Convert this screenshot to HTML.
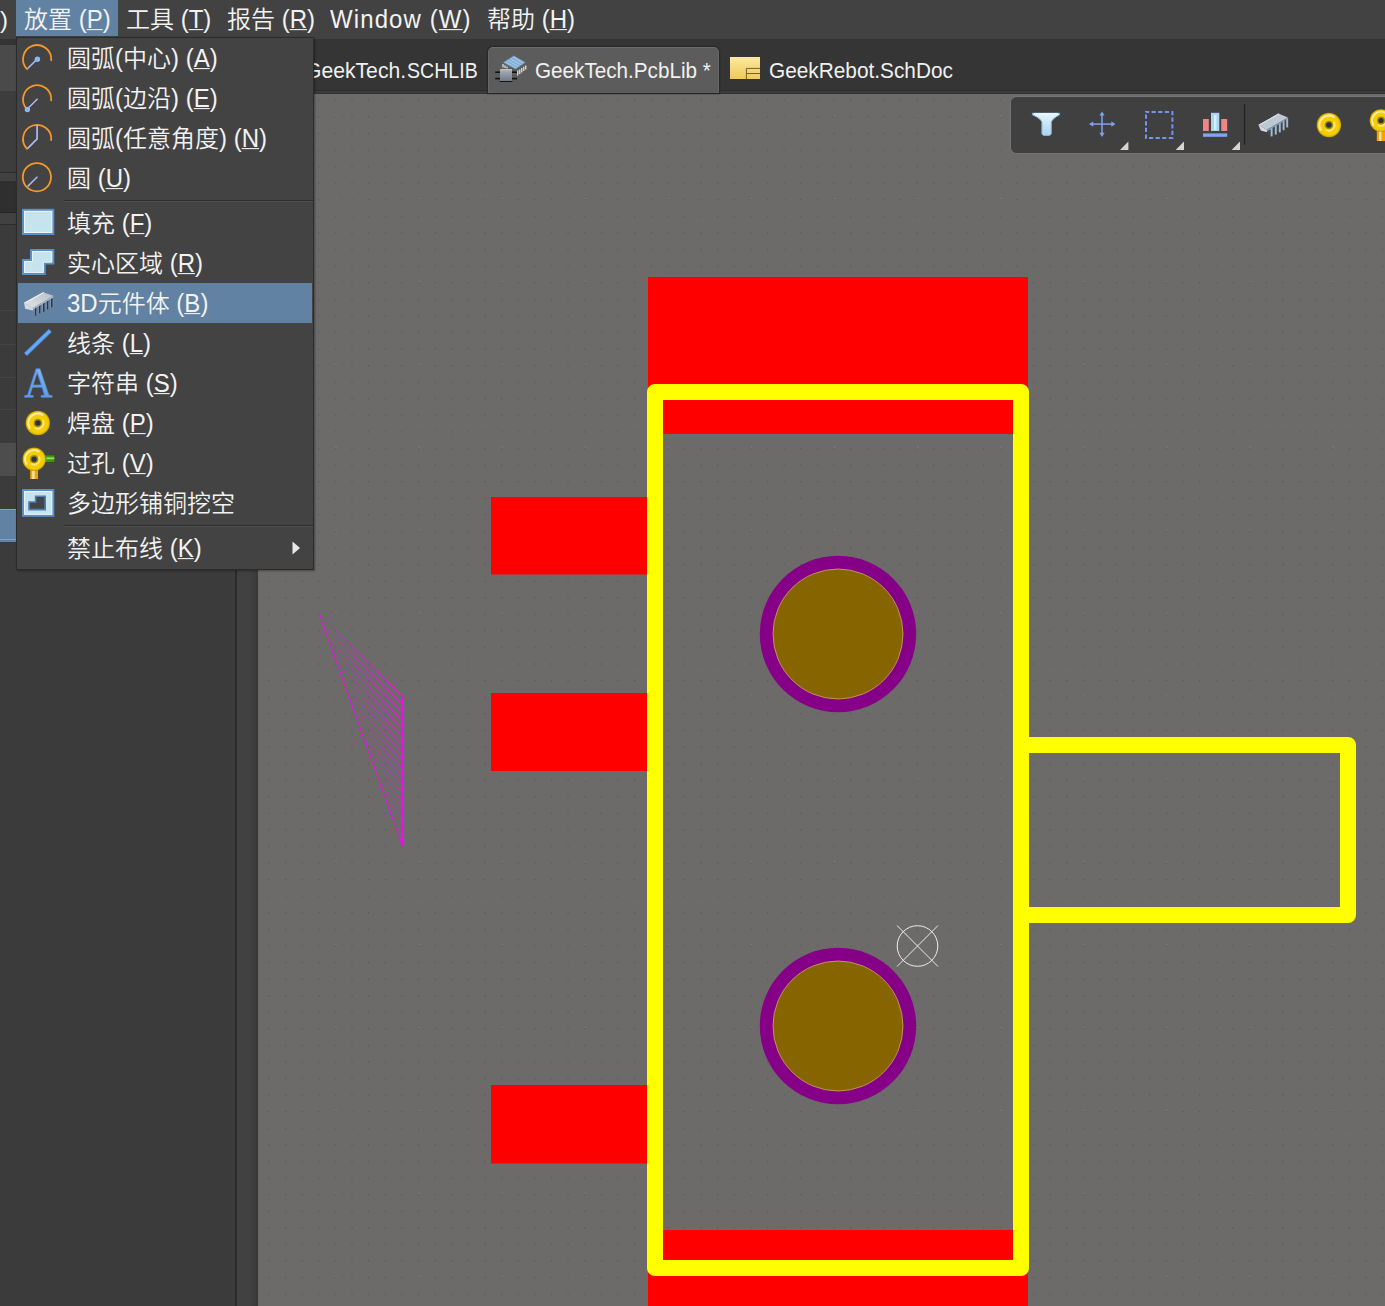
<!DOCTYPE html>
<html lang="zh-CN">
<head>
<meta charset="utf-8">
<title>PCB Library Editor</title>
<style>
html,body{margin:0;padding:0;}
body{width:1385px;height:1306px;overflow:hidden;position:relative;background:#6c6b69;
  font-family:"Liberation Sans","Noto Sans CJK SC",sans-serif;color:#f0f0f0;font-weight:350;}
.abs{position:absolute;}
#canvas{position:absolute;left:0;top:0;width:1385px;height:1306px;}
#menubar{position:absolute;left:0;top:0;width:1385px;height:39px;background:#424242;}
#menubar .mi{position:absolute;top:0;height:36px;line-height:40.2px;font-size:24px;white-space:nowrap;color:#f2f2f2;}
#menubar .mi u{text-decoration-thickness:1.2px;text-underline-offset:0.8px;}
#tabbar{position:absolute;left:0;top:38px;width:1385px;height:55.7px;background:#353535;}
#tabline{position:absolute;left:314px;top:89.5px;width:1071px;height:4.2px;background:#3a3a3a;border-top:1px solid #2d2d2d;border-bottom:1px solid #333;box-sizing:border-box;}
.tab{position:absolute;font-size:22.6px;line-height:26px;white-space:nowrap;color:#f0f0f0;transform:scaleX(0.928);transform-origin:left center;}
#acttab{position:absolute;left:488px;top:46.7px;width:230.6px;height:46px;background:#5c5c5c;border:1.2px solid #676767;border-top-color:#6c6c6c;border-bottom:none;border-radius:5px 5px 0 0;box-sizing:border-box;box-shadow:0 0 0 1.2px #282828;}
#leftpanel{position:absolute;left:0;top:38px;width:235px;height:1268px;background:#3b3b3b;}
#vline{position:absolute;left:235px;top:93px;width:1.5px;height:1213px;background:#2c2c2c;}
#vstrip{position:absolute;left:236.5px;top:93px;width:21.5px;height:1213px;background:linear-gradient(to right,#414141 0%,#414141 55%,#383838 100%);}
#menu{position:absolute;left:16px;top:37px;width:298px;height:533px;box-sizing:border-box;background:#434343;border:1px solid #2b2b2b;box-shadow:1px 1px 2px rgba(0,0,0,0.35);}
.it{position:absolute;left:1px;width:294px;height:40px;}
.it.hl{background:#6182a3;}
.it .tx{position:absolute;left:49px;top:0;line-height:42px;font-size:24px;white-space:nowrap;color:#f2f2f2;}
.it .tx u{text-decoration-thickness:1.2px;text-underline-offset:0.8px;}
.it svg{position:absolute;left:3px;top:4px;width:32px;height:32px;}
.la{display:inline-block;transform:scaleY(1.075);transform-origin:50% 69.8%;}
.sep{position:absolute;left:47px;width:249px;height:1px;background:#2c2c2c;border-bottom:1px solid #505050;}
#toolbar{position:absolute;left:1011px;top:97px;width:400px;height:55.6px;background:#404040;border-radius:5.5px;box-shadow:0 0 0 1px rgba(125,124,121,0.6);}
</style>
</head>
<body>
<svg id="canvas" viewBox="0 0 1385 1306">
  <defs>
    <pattern id="grid" x="2.4" y="0.2" width="16.62" height="16.58" patternUnits="userSpaceOnUse">
      <rect x="0" y="0" width="1.3" height="1.3" fill="#5a5957"/>
    </pattern>
    <pattern id="grid5" x="3" y="32.2" width="83.1" height="82.9" patternUnits="userSpaceOnUse">
      <rect x="0" y="0" width="1.2" height="1.2" fill="#838280"/>
    </pattern>
    <clipPath id="triclip"><polygon points="319.5,614.5 402.5,696.5 402.5,846"/></clipPath>
  </defs>
  <rect x="258" y="94" width="1127" height="1212" fill="url(#grid)"/>
  <rect x="258" y="94" width="1127" height="1212" fill="url(#grid5)"/>
  <!-- red pads -->
  <g fill="#ff0000">
    <rect x="648" y="277" width="380" height="157"/>
    <rect x="491" y="497" width="157" height="77.5"/>
    <rect x="491" y="693" width="157" height="78"/>
    <rect x="491" y="1085" width="157" height="78.5"/>
    <rect x="648" y="1230" width="380" height="80"/>
  </g>
  <!-- yellow outline -->
  <g fill="none" stroke="#ffff00" stroke-width="16" stroke-linejoin="round" stroke-linecap="round">
    <rect x="655" y="392" width="366" height="876"/>
    <polyline points="1021,745 1348,745 1348,915 1021,915"/>
  </g>
  <!-- pads -->
  <circle cx="838" cy="634" r="78.2" fill="#860087"/>
  <circle cx="838" cy="634" r="65" fill="#866400" stroke="#d9bb72" stroke-width="0.9" stroke-opacity="0.75"/>
  <circle cx="838" cy="1026" r="78.2" fill="#860087"/>
  <circle cx="838" cy="1026" r="65" fill="#866400" stroke="#d9bb72" stroke-width="0.9" stroke-opacity="0.75"/>
  <!-- origin marker -->
  <g fill="none" stroke="#ececec" stroke-width="1">
    <circle cx="917.5" cy="946" r="20.3"/>
    <line x1="897" y1="925.5" x2="938" y2="966.5"/>
    <line x1="897" y1="966.5" x2="938" y2="925.5"/>
  </g>
  <!-- hatched region -->
  <g stroke="#ff00ff" stroke-width="0.9" fill="none">
    <polygon points="319.5,614.5 402.5,696.5 402.5,846"/>
    <g clip-path="url(#triclip)"><line x1="402.5" y1="704.5" x2="302.5" y2="605.8"/><line x1="402.5" y1="712.6" x2="302.5" y2="613.8"/><line x1="402.5" y1="720.6" x2="302.5" y2="621.9"/><line x1="402.5" y1="728.7" x2="302.5" y2="629.9"/><line x1="402.5" y1="736.8" x2="302.5" y2="638.0"/><line x1="402.5" y1="744.8" x2="302.5" y2="646.0"/><line x1="402.5" y1="752.9" x2="302.5" y2="654.1"/><line x1="402.5" y1="760.9" x2="302.5" y2="662.1"/><line x1="402.5" y1="769.0" x2="302.5" y2="670.2"/><line x1="402.5" y1="777.0" x2="302.5" y2="678.2"/><line x1="402.5" y1="785.0" x2="302.5" y2="686.2"/><line x1="402.5" y1="793.1" x2="302.5" y2="694.3"/><line x1="402.5" y1="801.1" x2="302.5" y2="702.4"/><line x1="402.5" y1="809.2" x2="302.5" y2="710.4"/><line x1="402.5" y1="817.2" x2="302.5" y2="718.5"/><line x1="402.5" y1="825.3" x2="302.5" y2="726.5"/><line x1="402.5" y1="833.4" x2="302.5" y2="734.6"/><line x1="402.5" y1="841.4" x2="302.5" y2="742.6"/></g>
  </g>
</svg>

<div id="tabbar"></div>
<div id="leftpanel">
  <div class="abs" style="left:0;top:0;width:235px;height:7px;background:#343434;"></div>
  <div class="abs" style="left:0;top:7px;width:235px;height:46px;background:#4a4a4a;"></div>
  <div class="abs" style="left:0;top:53px;width:235px;height:81px;background:#3d3d3d;"></div>
  <div class="abs" style="left:0;top:134px;width:235px;height:1px;background:#2c2c2c;"></div>
  <div class="abs" style="left:0;top:135px;width:235px;height:8px;background:#414141;"></div>
  <div class="abs" style="left:0;top:143px;width:235px;height:31px;background:#2f2f2f;"></div>
  <div class="abs" style="left:0;top:174px;width:235px;height:1px;background:#262626;"></div>
  <div class="abs" style="left:0;top:175px;width:235px;height:11px;background:#414141;"></div>
  <div class="abs" style="left:0;top:186px;width:235px;height:1px;background:#2c2c2c;"></div>
  <div class="abs" style="left:0;top:272px;width:235px;height:1px;background:#444444;"></div>
  <div class="abs" style="left:0;top:306px;width:235px;height:1px;background:#444444;"></div>
  <div class="abs" style="left:0;top:339px;width:235px;height:1px;background:#444444;"></div>
  <div class="abs" style="left:0;top:371px;width:235px;height:1px;background:#444444;"></div>
  <div class="abs" style="left:0;top:405px;width:235px;height:33px;background:#4d4d4d;"></div>
  <div class="abs" style="left:0;top:470.5px;width:235px;height:33.5px;background:#6182a3;border-top:1.5px solid #7ba3cc;box-sizing:border-box;"></div>
  <div class="abs" style="left:0;top:500.5px;width:235px;height:1.2px;background:#7ba3cc;"></div>
</div>
<div id="vline"></div>
<div id="vstrip"></div>
<div id="tabline"></div>
<div id="menubar">
  <div class="abs" style="left:16px;top:0;width:102px;height:36px;background:#6182a3;"></div>
  <div class="mi" style="left:0px;">)</div>
  <div class="mi" style="left:24px;">放置 <span class="la">(<u>P</u>)</span></div>
  <div class="mi" style="left:126px;">工具 <span class="la">(<u>T</u>)</span></div>
  <div class="mi" style="left:227px;">报告 <span class="la">(<u>R</u>)</span></div>
  <div class="mi" style="left:330px;letter-spacing:1.1px;"><span class="la">Window</span> <span class="la">(<u>W</u>)</span></div>
  <div class="mi" style="left:487px;">帮助 <span class="la">(<u>H</u>)</span></div>
</div>
<div id="acttab"></div>
<div class="tab" style="left:305.4px;top:57.6px;transform:scaleX(0.936);">GeekTech.</div>
<div class="tab" style="left:406.6px;top:57.6px;transform:scaleX(0.866);">SCHLIB</div>
<div class="tab" style="left:535px;top:57.6px;transform:scaleX(0.915);">GeekTech.PcbLib *</div>
<div class="tab" style="left:769px;top:57.6px;transform:scaleX(0.921);">GeekRebot.SchDoc</div>
<div id="toolbar"></div>
<div id="menu">
  <div class="it" style="top:0px;"><!--ICON:arc1--><span class="tx">圆弧<span class="la">(</span>中心<span class="la">)</span> <span class="la">(<u>A</u>)</span></span></div>
  <div class="it" style="top:40px;"><!--ICON:arc2--><span class="tx">圆弧<span class="la">(</span>边沿<span class="la">)</span> <span class="la">(<u>E</u>)</span></span></div>
  <div class="it" style="top:80px;"><!--ICON:arc3--><span class="tx">圆弧<span class="la">(</span>任意角度<span class="la">)</span> <span class="la">(<u>N</u>)</span></span></div>
  <div class="it" style="top:120px;"><!--ICON:circ--><span class="tx">圆 <span class="la">(<u>U</u>)</span></span></div>
  <div class="sep" style="top:162px;"></div>
  <div class="it" style="top:165px;"><!--ICON:fill--><span class="tx">填充 <span class="la">(<u>F</u>)</span></span></div>
  <div class="it" style="top:205px;"><!--ICON:region--><span class="tx">实心区域 <span class="la">(<u>R</u>)</span></span></div>
  <div class="it hl" style="top:245px;"><!--ICON:body3d--><span class="tx"><span class="la">3D</span>元件体 <span class="la">(<u>B</u>)</span></span></div>
  <div class="it" style="top:285px;"><!--ICON:line--><span class="tx">线条 <span class="la">(<u>L</u>)</span></span></div>
  <div class="it" style="top:325px;"><!--ICON:str--><span class="tx">字符串 <span class="la">(<u>S</u>)</span></span></div>
  <div class="it" style="top:365px;"><!--ICON:pad--><span class="tx">焊盘 <span class="la">(<u>P</u>)</span></span></div>
  <div class="it" style="top:405px;"><!--ICON:via--><span class="tx">过孔 <span class="la">(<u>V</u>)</span></span></div>
  <div class="it" style="top:445px;"><!--ICON:cutout--><span class="tx">多边形铺铜挖空</span></div>
  <div class="sep" style="top:487px;"></div>
  <div class="it" style="top:490px;"><!--ICON:keepout--><span class="tx">禁止布线 <span class="la">(<u>K</u>)</span></span></div>
  <svg class="abs" style="left:275px;top:503px;" width="9" height="14" viewBox="0 0 9 14"><polygon points="0.5,0.5 8,7 0.5,13.5" fill="#e8e8e8"/></svg>
</div>
<svg id="tbicons" class="abs" style="left:0;top:0;pointer-events:none" width="1385" height="160" viewBox="0 0 1385 160">
<defs>
<linearGradient id="gfun" x1="0" y1="0" x2="0" y2="1"><stop offset="0" stop-color="#e6f6ff"/><stop offset="1" stop-color="#a9d4ee"/></linearGradient>
<linearGradient id="gsch" x1="0" y1="0" x2="0" y2="1"><stop offset="0" stop-color="#fbe9a0"/><stop offset="1" stop-color="#efc95c"/></linearGradient>
<linearGradient id="gsq" x1="0" y1="0" x2="0" y2="1"><stop offset="0" stop-color="#aab2ba"/><stop offset="1" stop-color="#6f7a86"/></linearGradient>
</defs>
<!-- filter funnel -->
<path d="M1032.4,113.2 L1059.6,113.2 L1059.6,114.8 Q1052.2,118.6 1051.3,122.4 L1051.3,134 L1049.6,135.5 L1043.4,135.5 L1041.9,134 L1041.9,122.4 Q1041,118.6 1032.4,114.8 Z" fill="url(#gfun)" stroke="#79b2e2" stroke-width="1"/>
<path d="M1034,113.8 L1058,113.8" stroke="#f4fbff" stroke-width="1.4"/>
<!-- move cross -->
<g stroke="#7ea2f2" stroke-width="1.5" fill="#7ea2f2">
<line x1="1102" y1="113.5" x2="1102" y2="135"/><line x1="1091" y1="124.1" x2="1113.5" y2="124.1"/>
<polygon points="1102,111.4 1104.6,115.6 1099.4,115.6" stroke="none"/><polygon points="1102,137 1104.6,132.8 1099.4,132.8" stroke="none"/>
<polygon points="1089,124.1 1093.2,121.5 1093.2,126.7" stroke="none"/><polygon points="1115.5,124.1 1111.3,121.5 1111.3,126.7" stroke="none"/>
</g>
<polygon points="1128.4,141.6 1128.4,150 1120,150" fill="#d4d4d4"/>
<!-- dashed select -->
<rect x="1146" y="112" width="26.4" height="26" fill="none" stroke="#7692f2" stroke-width="2" stroke-dasharray="4.2 2.4" stroke-dashoffset="1"/>
<polygon points="1184,141.6 1184,150 1175.6,150" fill="#d4d4d4"/>
<!-- align bars -->
<rect x="1203" y="119" width="5.8" height="12" fill="#f08585"/><rect x="1221.2" y="119" width="6" height="12" fill="#f08585"/>
<rect x="1211" y="112.8" width="8.3" height="18.2" fill="#a6d6f0"/><rect x="1214" y="115" width="2.4" height="15" fill="#d8f0fb"/>
<rect x="1203" y="133.4" width="24.2" height="3.4" fill="#7da6f0"/>
<polygon points="1240,141.6 1240,150 1231.6,150" fill="#d4d4d4"/>
<line x1="1244.5" y1="104" x2="1244.5" y2="145" stroke="#262626" stroke-width="1.4"/>
<!-- chip -->
<g>
<polygon points="1267.5,130.5 1288,118.2 1288,124 1272,136.4 1267.8,134.6" fill="#3c4a58" opacity="0.85"/>
<g stroke="#a9b9ca" stroke-width="1.9">
<line x1="1271.6" y1="127.6" x2="1271.6" y2="136.4"/><line x1="1275.8" y1="125.2" x2="1275.8" y2="134.6"/><line x1="1279.8" y1="122.8" x2="1279.8" y2="132.4"/><line x1="1283.6" y1="120.6" x2="1283.6" y2="130.2"/><line x1="1287.2" y1="118.4" x2="1287.2" y2="127.4"/>
</g>
<polygon points="1258.4,124.7 1278.4,113.6 1287.9,117.4 1266.9,129.7" fill="#bcc8d4"/>
<polygon points="1258.4,124.7 1278.4,113.6 1279.6,114.1 1259.8,125.5" fill="#d4dce4"/>
<polygon points="1258.4,124.7 1266.9,129.7 1267,132.2 1260.8,130.4" fill="#d3dae2"/>
<polygon points="1266.9,129.7 1287.9,117.4 1287.9,118.8 1267,131.4" fill="#8d9cad"/>
</g>
<!-- pad -->
<use href="#torus" transform="translate(1328.9,125)"/>
<!-- via -->
<rect x="1376.8" y="130" width="9" height="11" fill="#f2a400"/><rect x="1379" y="131" width="2.4" height="10" fill="#ffe6b0"/>
<use href="#torus" transform="translate(1381,120.5) scale(0.93)"/>
<!-- PcbLib tab icon -->
<g>
<g stroke="#f4f4f4" stroke-width="1.1">
<line x1="517.8" y1="70.6" x2="517.8" y2="75.4"/><line x1="519.8" y1="69.4" x2="519.8" y2="74"/><line x1="521.8" y1="68" x2="521.8" y2="72.6"/><line x1="523.8" y1="66.8" x2="523.8" y2="71"/><line x1="525.8" y1="65.4" x2="525.8" y2="69.6"/>
<line x1="503" y1="64" x2="503" y2="67.4"/><line x1="505" y1="65.2" x2="505" y2="68"/><line x1="507" y1="66.4" x2="507" y2="68.4"/>
</g>
<polygon points="503.3,62.4 513.9,55.8 525.3,62.4 515.6,69" fill="#9cc0e2" stroke="#5b86b0" stroke-width="0.6"/>
<g stroke="#6f98c2" stroke-width="0.7"><line x1="506" y1="60.8" x2="517.6" y2="67.6"/><line x1="508.6" y1="59.2" x2="520" y2="66"/><line x1="511.2" y1="57.6" x2="522.6" y2="64.2"/></g>
<g stroke="#111" stroke-width="1.6"><line x1="495.2" y1="72.2" x2="500" y2="72.2"/><line x1="495.2" y1="78.6" x2="500" y2="78.6"/><line x1="512" y1="72.2" x2="517" y2="72.2"/><line x1="512" y1="78.6" x2="517" y2="78.6"/></g>
<rect x="500" y="69.3" width="12" height="11.8" fill="url(#gsq)"/><rect x="499.6" y="81" width="12.8" height="1" fill="#151515"/>
<line x1="500.4" y1="69.7" x2="512" y2="69.7" stroke="#cfd5da" stroke-width="0.8"/>
</g>
<!-- SchDoc tab icon -->
<rect x="730" y="57" width="30" height="22" fill="url(#gsch)"/>
<path d="M746.4,79 V68.4 H760 M746.4,73.5 H760" fill="none" stroke="#6b5522" stroke-width="0.9"/>
</svg>
<svg id="menuicons" class="abs" style="left:0;top:0;pointer-events:none" width="330" height="580" viewBox="0 0 330 580">
<defs>
<radialGradient id="gpad" cx="0.42" cy="0.38" r="0.62"><stop offset="0" stop-color="#ffd91a"/><stop offset="0.7" stop-color="#f5c400"/><stop offset="1" stop-color="#d9a800"/></radialGradient>
<radialGradient id="gtor" cx="0.5" cy="0.5" r="0.5"><stop offset="0" stop-color="#f3cb00"/><stop offset="0.8" stop-color="#f4cf00"/><stop offset="0.93" stop-color="#e0b600"/><stop offset="1" stop-color="#b89200"/></radialGradient>
<g id="torus"><circle cx="0" cy="0" r="12.2" fill="url(#gtor)"/><path d="M-8.23,4.75 A9.5,9.5 0 0 1 4.75,-8.23" fill="none" stroke="#fff0c4" stroke-width="2.3" stroke-linecap="round" opacity="0.8"/><path d="M5.17,-2.41 A5.7,5.7 0 0 1 -2.41,5.17" fill="none" stroke="#ffe89c" stroke-width="2" stroke-linecap="round" opacity="0.8"/><circle cx="0" cy="0" r="4.3" fill="#a48c00"/><circle cx="0" cy="0" r="2.8" fill="#2c3146"/></g>
<linearGradient id="gchip" x1="1" y1="0" x2="0" y2="1"><stop offset="0" stop-color="#b8bfc8"/><stop offset="1" stop-color="#e2e5e8"/></linearGradient>
<linearGradient id="gline" x1="0" y1="0" x2="1" y2="1"><stop offset="0" stop-color="#7db8ff"/><stop offset="1" stop-color="#4f96ea"/></linearGradient>
<linearGradient id="gA" x1="0" y1="0" x2="0" y2="1"><stop offset="0" stop-color="#8cc0f6"/><stop offset="1" stop-color="#4f94e4"/></linearGradient>
</defs>
<path d="M51.2,60.3 A14.1,14.1 0 1 0 27.1,69.1" fill="none" stroke="#f4982c" stroke-width="1.8" stroke-linecap="round"/>
<line x1="27.7" y1="68.5" x2="37.1" y2="59.1" stroke="#a9b9f6" stroke-width="1.5"/><circle cx="37.4" cy="59.300000000000004" r="2.7" fill="#8db7ee"/>
<path d="M51.2,100.4 A14.1,14.1 0 1 0 27.1,109.2" fill="none" stroke="#f4982c" stroke-width="1.8" stroke-linecap="round"/>
<line x1="27.1" y1="109.2" x2="37.6" y2="98.7" stroke="#a9b9f6" stroke-width="1.5"/><circle cx="27.4" cy="109.5" r="2.7" fill="#8db7ee"/>
<path d="M51.2,140.1 A14.1,14.1 0 1 0 27.1,148.9" fill="none" stroke="#f4982c" stroke-width="1.8" stroke-linecap="round"/>
<polyline points="37.1,125.3 37.1,138.9 27.7,148.3" fill="none" stroke="#a9b9f6" stroke-width="1.7" stroke-linejoin="miter"/>
<circle cx="36.9" cy="177.2" r="14.1" fill="none" stroke="#f4982c" stroke-width="1.8"/>
<line x1="27.7" y1="186.4" x2="37.4" y2="176.7" stroke="#a9b9f6" stroke-width="1.5"/>
<rect x="23" y="209.8" width="30.3" height="24.2" fill="#c6e4ee" stroke="#5c8fc6" stroke-width="2"/><rect x="24.6" y="211.4" width="27.1" height="21" fill="none" stroke="#e6f5fc" stroke-width="1"/>
<polygon points="31,250 53.3,250 53.3,263.5 44.7,263.5 44.7,274 23,274 23,260 31,260" fill="#c6e4ee" stroke="#5c8fc6" stroke-width="2"/><polygon points="32.5,251.6 51.7,251.6 51.7,262 43.2,262 43.2,272.4 24.6,272.4 24.6,261.6 32.5,261.6" fill="none" stroke="#e6f5fc" stroke-width="1"/>
<g>
<g stroke="#9fb2cc" stroke-width="3" stroke-linecap="butt" opacity="0.55">
<line x1="35.6" y1="308" x2="35.6" y2="315"/><line x1="39.7" y1="306" x2="39.7" y2="313"/><line x1="43.8" y1="303.8" x2="43.8" y2="311.4"/><line x1="47.6" y1="301.6" x2="47.6" y2="309.4"/><line x1="51.8" y1="299.2" x2="51.8" y2="307"/>
</g>
<g stroke="#24354f" stroke-width="1.6" stroke-linecap="butt">
<line x1="35.6" y1="307" x2="35.6" y2="315.5"/><line x1="39.7" y1="305" x2="39.7" y2="313.2"/><line x1="43.8" y1="302.8" x2="43.8" y2="311.7"/><line x1="47.6" y1="300.8" x2="47.6" y2="309.5"/><line x1="51.8" y1="298.4" x2="51.8" y2="307.2"/>
</g>
<polygon points="24,302.8 43.1,292.3 53.3,295.8 32.9,307.9" fill="url(#gchip)"/>
<polygon points="24,302.8 32.9,307.9 33,310.6 25.2,308.8" fill="#d6dade"/>
<polygon points="32.9,307.9 53.3,295.8 53.3,297.4 33,309.8" fill="#aeb5bd"/>
<polygon points="24,302.8 43.1,292.3 44.3,292.8 25.3,303.5" fill="#eef0f2"/>
</g>
<line x1="25.6" y1="354.3" x2="50.2" y2="330.6" stroke="#3f78c0" stroke-width="4.6" stroke-linecap="butt"/><line x1="25.6" y1="354.3" x2="50.2" y2="330.6" stroke="url(#gline)" stroke-width="3" stroke-linecap="butt"/>
<text transform="translate(38.4,396.9) scale(0.92,1)" x="0" y="0" text-anchor="middle" font-family="Liberation Serif, serif" font-size="41.8" fill="url(#gA)" stroke="#5c98e4" stroke-width="0.8">A</text>
<use href="#torus" transform="translate(37.8,423)"/>
<rect x="30.2" y="469" width="7.8" height="10" fill="#f2a400"/><rect x="32.2" y="470" width="2.4" height="9" fill="#ffe6b0"/><rect x="45" y="455.4" width="9.3" height="6.6" fill="#3c9a08"/><rect x="46.5" y="457.4" width="7.8" height="1.8" fill="#9fd86a"/><use href="#torus" transform="translate(34.1,459.2) scale(0.95)"/>
<rect x="23" y="490" width="30.3" height="25.8" fill="#c6e4ee" stroke="#5c8fc6" stroke-width="2"/><rect x="24.6" y="491.6" width="27.1" height="22.6" fill="none" stroke="#e6f5fc" stroke-width="1"/><polygon points="35.6,496.2 45.2,496.2 45.2,509.6 29,509.6 29,502 35.6,502" fill="#414449" stroke="#4f7fb5" stroke-width="1.6"/>
</svg>
</body>
</html>
